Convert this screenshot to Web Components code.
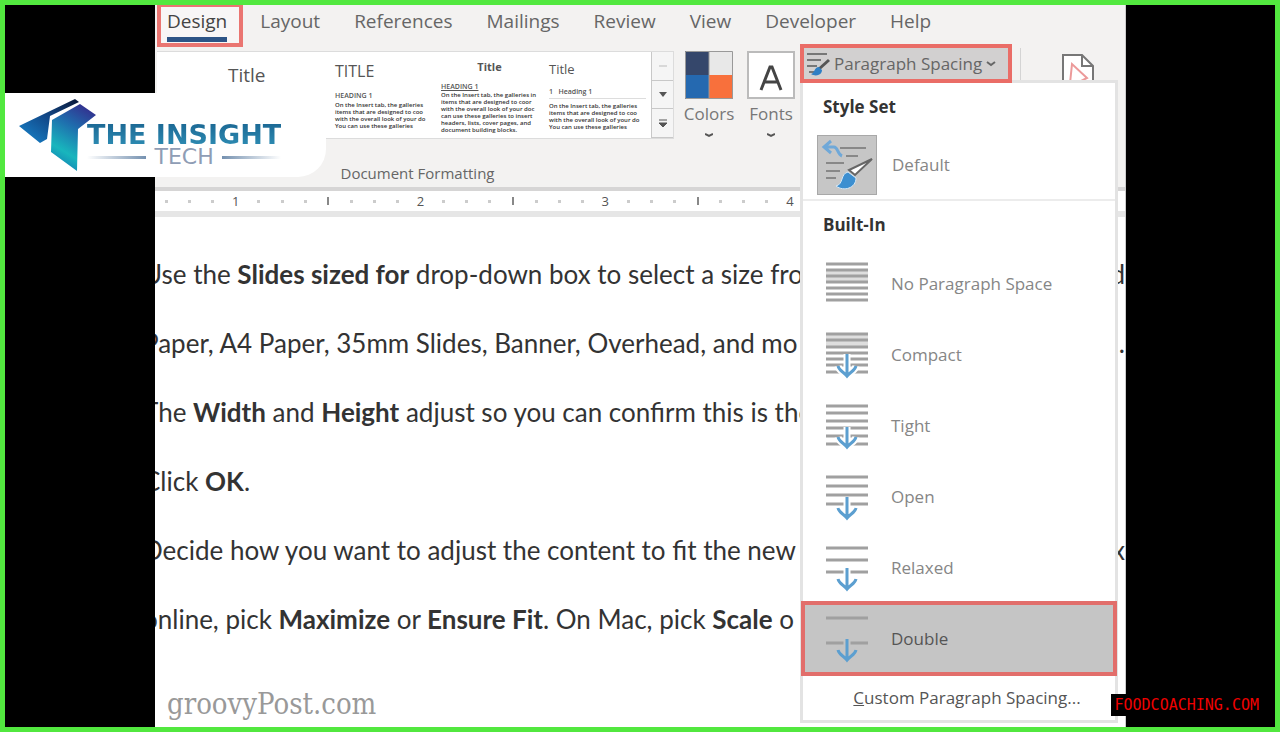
<!DOCTYPE html>
<html lang="en">
<head>
<meta charset="utf-8">
<title>Paragraph Spacing</title>
<style>
body{
  margin: 0;
  background: #000;
  font-family: "Open Sans", "Noto Sans", sans-serif;
  color: #555;
}
</style>
</head>
<body>
<video-frame>
  <site-logo slot="logo"></site-logo>
  <word-window>
    <ribbon-tabs slot="tabs"></ribbon-tabs>
    <ribbon-body slot="ribbon">
      <style-gallery></style-gallery>
      <ribbon-button slot="tools" label="Colors" icon="colors"></ribbon-button>
      <ribbon-button slot="tools" label="Fonts" icon="fonts"></ribbon-button>
      <spacing-dropdown slot="tools"></spacing-dropdown>
    </ribbon-body>
    <doc-ruler slot="ruler"></doc-ruler>
    <doc-line>Use the <b>Slides sized for</b> drop-down box to select a size fro<span slot="end">d</span></doc-line>
    <doc-line>Paper, A4 Paper, 35mm Slides, Banner, Overhead, and mo<span slot="end">.</span></doc-line>
    <doc-line>The <b>Width</b> and <b>Height</b> adjust so you can confirm this is the</doc-line>
    <doc-line>Click <b>OK</b>.</doc-line>
    <doc-line>Decide how you want to adjust the content to fit the new<span slot="end">x</span></doc-line>
    <doc-line>online, pick <b>Maximize</b> or <b>Ensure Fit</b>. On Mac, pick <b>Scale</b> o</doc-line>
    <span slot="mark">groovyPost.com</span>
  </word-window>
  <span slot="badge">FOODCOACHING.COM</span>
</video-frame>

<script>
// Attach an open shadow root filled with the given markup
function fill(element, html){
  const template = document.createElement('template');
  template.innerHTML = html;
  element.attachShadow({mode:"open"});
  element.shadowRoot.appendChild(template.content.cloneNode(true));
}

// Green frame with black bars on both sides of the window
class VideoFrame extends HTMLElement{
  constructor(){
    super();
    fill(this, `
<style>
:host{
  display: grid;
  grid-template-columns: 150fr 971fr 149fr;
  position: relative;
  box-sizing: border-box;
  min-height: 100vh;
  border: 5px solid #52e83f;
  overflow: hidden;
}
main{
  grid-column: 2;
  display: grid;
  min-width: 0;
}
::slotted([slot=logo]){
  position: absolute;
  left: 0;
  top: 88px;
}
::slotted([slot=badge]){
  position: absolute;
  z-index: 2;
  right: 10px;
  bottom: 11px;
  padding: 0 6px 0 4px;
  background: #000;
  color: #f00000;
  font: 15px/22px "DejaVu Sans Mono", monospace;
}
</style>
<main><slot></slot></main>
<slot name="logo"></slot>
<slot name="badge"></slot>`);
  }
}
customElements.define("video-frame", VideoFrame);

// Channel logo
class SiteLogo extends HTMLElement{
  constructor(){
    super();
    fill(this, `
<style>
:host{
  display: flex;
  box-sizing: border-box;
  width: 321px;
  height: 84px;
  padding: 5px 0 0 14px;
  background: #fff;
  border-radius: 0 0 28px 0;
}
svg{
  flex: none;
}
div{
  margin-left: -10px;
  padding-top: 24px;
}
b{
  display: block;
  font: bold 27px/25px "DejaVu Sans", sans-serif;
  background: linear-gradient(#1b6793, #2e8db4);
  background-clip: text;
  color: transparent;
  white-space: nowrap;
}
p{
  display: flex;
  align-items: center;
  gap: 8px;
  margin: 0;
  font: 22px/20px "DejaVu Sans", sans-serif;
  color: #8f9db5;
}
i{
  flex: 1;
  height: 3px;
  background: linear-gradient(90deg, #fff, #7591b0);
}
i:last-child{
  background: linear-gradient(90deg, #7591b0, #fff);
}
</style>
<svg width="78" height="74" viewBox="0 0 78 74">
  <defs>
    <linearGradient id="a" x1="0" y1="1" x2="1" y2="0"><stop offset="0" stop-color="#1788cf"/><stop offset=".5" stop-color="#124b8c"/><stop offset="1" stop-color="#0a1738"/></linearGradient>
    <linearGradient id="b" x1=".7" y1="0" x2=".3" y2="1"><stop offset="0" stop-color="#33308f"/><stop offset=".35" stop-color="#1f6cad"/><stop offset=".75" stop-color="#18b6bd"/><stop offset="1" stop-color="#137fb4"/></linearGradient>
  </defs>
  <path d="M0 28 56 1 60 4 31 18 28 41 21 45Z" fill="url(#a)"/>
  <path d="M33 22 61 6 77 17 59 31 58 73 32 54Z" fill="url(#b)"/>
</svg>
<div>
  <b>THE INSIGHT</b>
  <p><i></i>TECH<i></i></p>
</div>`);
  }
}
customElements.define("site-logo", SiteLogo);

// Word window: tabs, ribbon, ruler and the page
class WordWindow extends HTMLElement{
  constructor(){
    super();
    fill(this, `
<style>
:host{
  display: flex;
  flex-direction: column;
  min-width: 0;
  background: #fff;
  border-right: 1px solid #ccc;
}
article{
  flex: 1;
  display: flex;
  flex-direction: column;
  overflow: hidden;
  padding-top: 23px;
}
footer{
  padding: 28px 0 0 12px;
  color: #999;
  font: 29px/44px "DejaVu Serif Condensed", "DejaVu Serif", serif;
}
</style>
<slot name="tabs"></slot>
<slot name="ribbon"></slot>
<slot name="ruler"></slot>
<article>
  <slot></slot>
  <footer><slot name="mark"></slot></footer>
</article>`);
  }
}
customElements.define("word-window", WordWindow);

class RibbonTabs extends HTMLElement{
  constructor(){
    super();
    const names = ["Layout", "References", "Mailings", "Review", "View", "Developer", "Help"];
    fill(this, `
<style>
:host{
  display: block;
  background: #f3f2f1;
}
nav{
  display: flex;
  align-items: flex-start;
  height: 43px;
  padding-left: 2px;
}
button{
  padding: 0 17px;
  border: 0;
  background: none;
  color: #666;
  font: 19px/32px "Open Sans", sans-serif;
}
button.on{
  box-sizing: border-box;
  height: 42px;
  padding: 0 12px 0 6px;
  border: 4px solid #ea7571;
  border-top-width: 2px;
  background: #f8f6f6;
  color: #444;
  line-height: 26px;
}
button.on span{
  display: block;
  height: 34px;
  box-sizing: border-box;
  border-bottom: 5px solid #2d5486;
}
</style>
<nav>
  <button class="on" type="button"><span>Design</span></button>
  ${names.map(name => `<button type="button">${name}</button>`).join("")}
</nav>`);
  }
}
customElements.define("ribbon-tabs", RibbonTabs);

class RibbonBody extends HTMLElement{
  constructor(){
    super();
    fill(this, `
<style>
:host{
  display: block;
  background: #f3f2f1;
  border-bottom: 4px solid #d6d5d5;
}
div{
  display: flex;
  align-items: flex-start;
  height: 139px;
  padding-left: 2px;
}
section{
  flex: none;
  width: 521px;
  padding-top: 3px;
}
p{
  margin: 23px 0 0;
  text-align: center;
  font-size: 15px;
  line-height: 22px;
  color: #666;
}
hr{
  width: 1px;
  height: 36px;
  margin: 0 40px 0 8px;
  border: 0;
  background: #d4d4d4;
}
svg{
  margin-top: 5px;
}
</style>
<div>
  <section>
    <slot></slot>
    <p>Document Formatting</p>
  </section>
  <slot name="tools"></slot>
  <hr>
  <svg width="34" height="44" viewBox="0 0 34 44" fill="none">
    <path d="M2 43V2H21L32 13V43" fill="#fff" stroke="#777" stroke-width="2"/>
    <path d="M21 2V13H32" stroke="#777" stroke-width="2"/>
    <path d="M8 40 11 11 26 25 18 29 28 34" stroke="#ec9a9a" stroke-width="2"/>
  </svg>
</div>`);
  }
}
customElements.define("ribbon-body", RibbonBody);

// Gallery of document style sets
class StyleGallery extends HTMLElement{
  constructor(){
    super();
    fill(this, `
<style>
:host{
  display: flex;
  height: 88px;
  margin-right: 4px;
  border: 1px solid #dcdcdc;
  border-left: 0;
  box-sizing: border-box;
  background: #fff;
}
.sets{
  flex: 1;
  display: grid;
  grid-template-columns: 178px 106px 108px 1fr;
}
.sets div{
  width: 97px;
  color: #555;
}
h4, h5, p{
  margin: 0;
  white-space: nowrap;
}
h4{
  font-weight: 400;
  font-size: 16px;
  line-height: 38px;
}
h5{
  font-weight: 600;
  font-size: 7px;
  line-height: 12px;
}
p{
  font-size: 6px;
  font-weight: 600;
  line-height: 7px;
  color: #333;
}
.sets .plain{
  padding-left: 71px;
}
.plain h4{
  font-size: 19px;
  line-height: 46px;
}
.bold h4{
  font-size: 11px;
  font-weight: 700;
  line-height: 30px;
  text-align: center;
}
.bold h5{
  line-height: 10px;
  text-decoration: underline;
}
.light h4{
  font-size: 13px;
  line-height: 34px;
}
.light h5{
  margin-bottom: 4px;
  border-bottom: 1px solid #ddd;
}
.scroll{
  display: flex;
  flex-direction: column;
  width: 22px;
}
button{
  flex: 1;
  display: grid;
  place-items: center;
  padding: 0;
  border: 0;
  border-left: 1px solid #c8c8c8;
  border-bottom: 1px solid #c8c8c8;
  background: #f5f5f5;
}
</style>
<div class="sets">
  <div class="plain"><h4>Title</h4></div>
  <div><h4>TITLE</h4><h5>HEADING 1</h5><p>On the Insert tab, the galleries<br>items that are designed to coo<br>with the overall look of your do<br>You can use these galleries</p></div>
  <div class="bold"><h4>Title</h4><h5>HEADING 1</h5><p>On the Insert tab, the galleries in<br>items that are designed to coor<br>with the overall look of your doc<br>can use these galleries to insert<br>headers, lists, cover pages, and<br>document building blocks.</p></div>
  <div class="light"><h4>Title</h4><h5>1&nbsp;&nbsp; Heading 1</h5><p>On the Insert tab, the galleries<br>items that are designed to coo<br>with the overall look of your do<br>You can use these galleries</p></div>
</div>
<div class="scroll">
  <button type="button" aria-label="Row up"><svg width="8" height="4"><path d="M0 2H8" stroke="#bbb"/></svg></button>
  <button type="button" aria-label="Row down"><svg width="8" height="5"><path d="M0 0H8L4 5Z" fill="#555"/></svg></button>
  <button type="button" aria-label="More"><svg width="8" height="9"><path d="M0 1H8M0 4H8L4 8Z" fill="#555" stroke="#555"/></svg></button>
</div>`);
  }
}
customElements.define("style-gallery", StyleGallery);

// Large ribbon button with a label and a caret below
class RibbonButton extends HTMLElement{
  constructor(){
    super();
    const icons = {
      colors: `<path d="M0 0H24V24H0Z" fill="#35476b"/><path d="M24 0H48V24H24Z" fill="#e8e8e8"/><path d="M0 24H24V48H0Z" fill="#2569b0"/><path d="M24 24H48V48H24Z" fill="#f8703c"/><path d="M.5.5H47.5V47.5H.5ZM24 0V48" fill="none" stroke="#999"/>`,
      fonts: `<path d="M1 1H47V47H1Z" fill="#fff" stroke="#bbb" stroke-width="2"/><path d="M14 39 23 16H25L34 39M17 31H31" fill="none" stroke="#444" stroke-width="3"/>`
    };
    fill(this, `
<style>
:host{
  display: block;
  flex: none;
  width: 62px;
}
button{
  display: flex;
  flex-direction: column;
  align-items: center;
  width: 100%;
  padding: 3px 0 0;
  border: 0;
  background: none;
  color: #777;
  font: 17px/30px "Open Sans", sans-serif;
}
</style>
<button type="button">
  <svg width="48" height="48" viewBox="0 0 48 48">${icons[this.getAttribute("icon")]}</svg>
  ${this.getAttribute("label")}
  <svg width="8" height="10"><path d="M0 5 4 7 8 5" fill="none" stroke="#555" stroke-width="2"/></svg>
</button>`);
  }
}
customElements.define("ribbon-button", RibbonButton);

// Paragraph Spacing button and its open menu
class SpacingDropdown extends HTMLElement{
  constructor(){
    super();
    fill(this, `
<style>
:host{
  display: block;
  flex: none;
  position: relative;
  z-index: 1;
  width: 212px;
  margin: -4px 0 0 -2px;
}
.open{
  position: relative;
  z-index: 1;
  display: flex;
  align-items: center;
  gap: 4px;
  width: 100%;
  height: 39px;
  padding: 0 0 0 2px;
  border: 4px solid #ea6d67;
  background: #d2d0d0;
  color: #666;
  font: 17px/30px "Open Sans", sans-serif;
  white-space: nowrap;
}
.open svg{
  flex: none;
}
.menu{
  position: absolute;
  left: 0;
  top: 36px;
  box-sizing: border-box;
  width: 318px;
  border: 3px solid #e3e3e3;
  background: #fff;
}
h3{
  margin: 0;
  padding-left: 20px;
  color: #333;
  font-size: 17px;
  line-height: 47px;
}
hr{
  height: 2px;
  margin: 0;
  border: 0;
  background: #ececec;
}
.custom{
  display: block;
  width: 100%;
  padding: 2px 0 0 16px;
  border: 0;
  background: none;
  color: #555;
  font: 17px/44px "Open Sans", sans-serif;
}
</style>
<button class="open" type="button" aria-expanded="true">
  <svg width="24" height="26" viewBox="0 0 24 26" fill="none">
    <path d="M1 3H21M1 9H15M1 15H11M3 21H8" stroke="#777" stroke-width="2"/>
    <path d="M23 9 13 18" stroke="#555" stroke-width="3"/>
    <path d="M13 16C8 16 9 22 5 23 10 26 16 24 16 19Z" fill="#2f7fc4"/>
  </svg>
  Paragraph Spacing
  <svg width="10" height="8"><path d="M1 2 5 5 9 2" fill="none" stroke="#666" stroke-width="2"/></svg>
</button>
<div class="menu" role="menu">
  <h3>Style Set</h3>
  <spacing-item class="default">Default</spacing-item>
  <hr>
  <h3>Built-In</h3>
  <spacing-item lines="4 10 16 22 28 34 40" shade="10 22">No Paragraph Space</spacing-item>
  <spacing-item lines="3 9 16 22 28 34 41" shade="3 16" arrow="23">Compact</spacing-item>
  <spacing-item lines="4 11 19 26 34 42" arrow="25">Tight</spacing-item>
  <spacing-item lines="4 13 22 31" arrow="24">Open</spacing-item>
  <spacing-item lines="4 16 28" arrow="24">Relaxed</spacing-item>
  <spacing-item class="on" lines="3 28" arrow="24">Double</spacing-item>
  <button class="custom" type="button"><u>C</u>ustom Paragraph Spacing...</button>
</div>`);
  }
}

// One row of the menu, its icon is drawn from the "lines", "shade" and "arrow" attributes
class SpacingItem extends HTMLElement{
  connectedCallback(){
    if(this.shadowRoot)
      return;
    fill(this, `
<style>
:host{
  display: block;
}
button{
  display: flex;
  align-items: center;
  gap: 22px;
  width: 100%;
  height: 71px;
  padding: 0 0 0 22px;
  border: 0;
  background: #fff;
  color: #868686;
  font: 17px/24px "Open Sans", sans-serif;
}
:host(.default) button{
  gap: 15px;
  height: 69px;
  padding-left: 14px;
}
:host(.default) svg{
  border: 1px solid #a8a8a8;
  background: #c6c6c6;
}
:host(.on) button{
  background: #c5c5c5;
  color: #555;
  outline: 4px solid #e26e6b;
  outline-offset: -2px;
}
</style>
<button type="button" role="menuitem">${this.icon()}<span><slot></slot></span></button>`);
  }

  icon(){
    if(!this.hasAttribute("lines"))
      return `<svg width="58" height="58" viewBox="0 0 58 58" fill="none">
        <path d="M22 12H48M28 20H40M8 27H26M8 35H22M8 42H18" stroke="#888" stroke-width="2"/>
        <path d="M13 5 6 11 13 17M6 11H16C20 11 19 18 24 20" stroke="#6fa8d8" stroke-width="3"/>
        <path d="M54 23 37 39 31 34Z" fill="#fff" stroke="#666" stroke-width="2"/>
        <path d="M30 36C22 38 26 48 18 50 26 56 38 52 38 42Z" fill="#3d8fd0" stroke="#d6e8f6"/>
      </svg>`;
    const halo = this.className == "on" ? "#c5c5c5" : "#fff";
    const lines = this.getAttribute("lines").split(" ").map(y => `M1 ${y}H43`).join("");
    const top = this.getAttribute("arrow");
    const arrow = top ? `M22 ${top}V45M13 35C14 40 19 41 22 45 25 41 30 40 31 35` : "";
    const shade = (this.getAttribute("shade") || "0 0").split(" ");
    return `<svg width="44" height="48" viewBox="0 0 44 48" fill="none">
      <path d="M1 ${shade[0]}H43V${shade[1]}H1Z" fill="#dedede"/>
      <path d="${lines}" stroke="#a0a0a0" stroke-width="3"/>
      <path d="${arrow}" stroke="${halo}" stroke-width="7"/>
      <path d="${arrow}" stroke="#5c9fd0" stroke-width="3"/>
    </svg>`;
  }
}
customElements.define("spacing-item", SpacingItem);
customElements.define("spacing-dropdown", SpacingDropdown);

// Ruler: 8 cells to an inch, the first number stands in the fourth cell
class DocRuler extends HTMLElement{
  constructor(){
    super();
    let cells = "";
    for(let i = 0; i < 42; i++){
      const step = (i + 5) % 8;
      if(step == 0)
        cells += `<span>${(i + 5) / 8}</span>`;
      else
        cells += `<span><i class="${step == 4 ? "half" : ""}"></i></span>`;
    }
    fill(this, `
<style>
:host{
  display: flex;
  height: 20px;
  border-bottom: 6px solid #e6e6e6;
  background: #fff;
}
span{
  flex: 1 1 0;
  display: grid;
  place-items: center;
  color: #555;
  font: 13px/20px "Open Sans", sans-serif;
}
i{
  width: 3px;
  height: 3px;
  background: #ccc;
}
.half{
  width: 2px;
  height: 8px;
  background: #888;
}
</style>
${cells}`);
  }
}
customElements.define("doc-ruler", DocRuler);

// Double spaced line, the page is scrolled a little past its left edge
class DocLine extends HTMLElement{
  constructor(){
    super();
    fill(this, `
<style>
:host{
  display: flex;
  justify-content: space-between;
  margin-left: -12px;
  color: #333;
  font: 26px/69px Lato, sans-serif;
  white-space: nowrap;
}
p{
  margin: 0;
}
</style>
<p><slot></slot></p>
<slot name="end"></slot>`);
  }
}
customElements.define("doc-line", DocLine);
</script>
</body>
</html>
